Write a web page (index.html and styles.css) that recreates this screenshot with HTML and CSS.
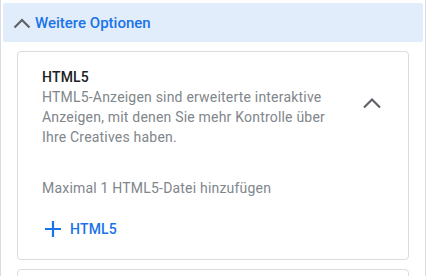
FILE: index.html
```html
<!DOCTYPE html>
<html lang="de">
<head>
  <meta charset="UTF-8">
  <meta name="viewport" content="width=device-width, initial-scale=1.0">
  <title>Weitere Optionen</title>
  <link rel="stylesheet" href="styles.css">
</head>
<body>
  <div class="panel">
    <button class="section-toggle">
      <svg class="chevron" width="24" height="24" viewBox="0 0 24 24">
        <polyline points="4.5,16.5 12,9 19.5,16.5" fill="none" stroke="#5f6368" stroke-width="2.2"/>
      </svg>
      <span>Weitere Optionen</span>
    </button>

    <div class="card">
      <div class="card-head">
        <div class="card-text">
          <div class="card-title">HTML5</div>
          <div class="card-desc">HTML5-Anzeigen sind erweiterte interaktive Anzeigen, mit denen Sie mehr Kontrolle über Ihre Creatives haben.</div>
        </div>
        <svg class="chevron" width="24" height="24" viewBox="0 0 24 24">
          <polyline points="4,16.5 12,8.5 20,16.5" fill="none" stroke="#5f6368" stroke-width="2.2"/>
        </svg>
      </div>
      <div class="card-hint">Maximal 1 HTML5-Datei hinzufügen</div>
      <button class="add-button">
        <svg width="20" height="20" viewBox="0 0 20 20">
          <path d="M10 2v16M2 10h16" stroke="#1a73e8" stroke-width="2.2" fill="none"/>
        </svg>
        <span>HTML5</span>
      </button>
    </div>

    <div class="card card-next"></div>
  </div>
</body>
</html>
```

FILE: styles.css
```css
body {
  margin: 0;
  font-family: Roboto, "Noto Sans", Arial, sans-serif;
  background: #fff;
}

.panel {
  width: 424px;
  height: 276px;
  border-left: 1px solid #dadce0;
  border-right: 1px solid #dadce0;
  overflow: hidden;
}

.section-toggle {
  display: flex;
  align-items: center;
  width: 420px;
  height: 39px;
  margin: 3px 2px 0;
  padding: 0 0 0 11px;
  border: none;
  border-radius: 2px;
  background: #e1edfb;
  color: #1a73e8;
  font-family: inherit;
  font-size: 15px;
  font-weight: 500;
  text-align: left;
  cursor: pointer;
}

.section-toggle .chevron {
  margin-left: -4px;
  margin-right: 1px;
}

.card {
  margin: 9px 16px 0 16px;
  padding: 15px 24px 12px 24px;
  border: 1px solid #dadce0;
  border-radius: 4px;
}

.card-head {
  display: flex;
  align-items: center;
  gap: 24px;
}

.card-text {
  flex: 1;
}

.card-title {
  font-size: 14px;
  line-height: 20px;
  font-weight: 500;
  letter-spacing: 0.2px;
  color: #202124;
}

.card-desc {
  font-size: 14px;
  line-height: 20px;
  letter-spacing: 0.2px;
  color: #80868b;
}

.card-head .chevron {
  flex: none;
  margin-top: -8px;
}

.card-hint {
  margin-top: 31px;
  font-size: 14px;
  line-height: 20px;
  letter-spacing: 0.2px;
  color: #80868b;
}

.add-button {
  display: flex;
  align-items: center;
  gap: 7px;
  height: 36px;
  margin-top: 13px;
  padding: 0 0 0 1px;
  border: none;
  background: none;
  color: #1a73e8;
  font-family: inherit;
  font-size: 14px;
  font-weight: 500;
  letter-spacing: 0.2px;
  cursor: pointer;
}

.card-next {
  height: 40px;
  padding: 0;
}
```
